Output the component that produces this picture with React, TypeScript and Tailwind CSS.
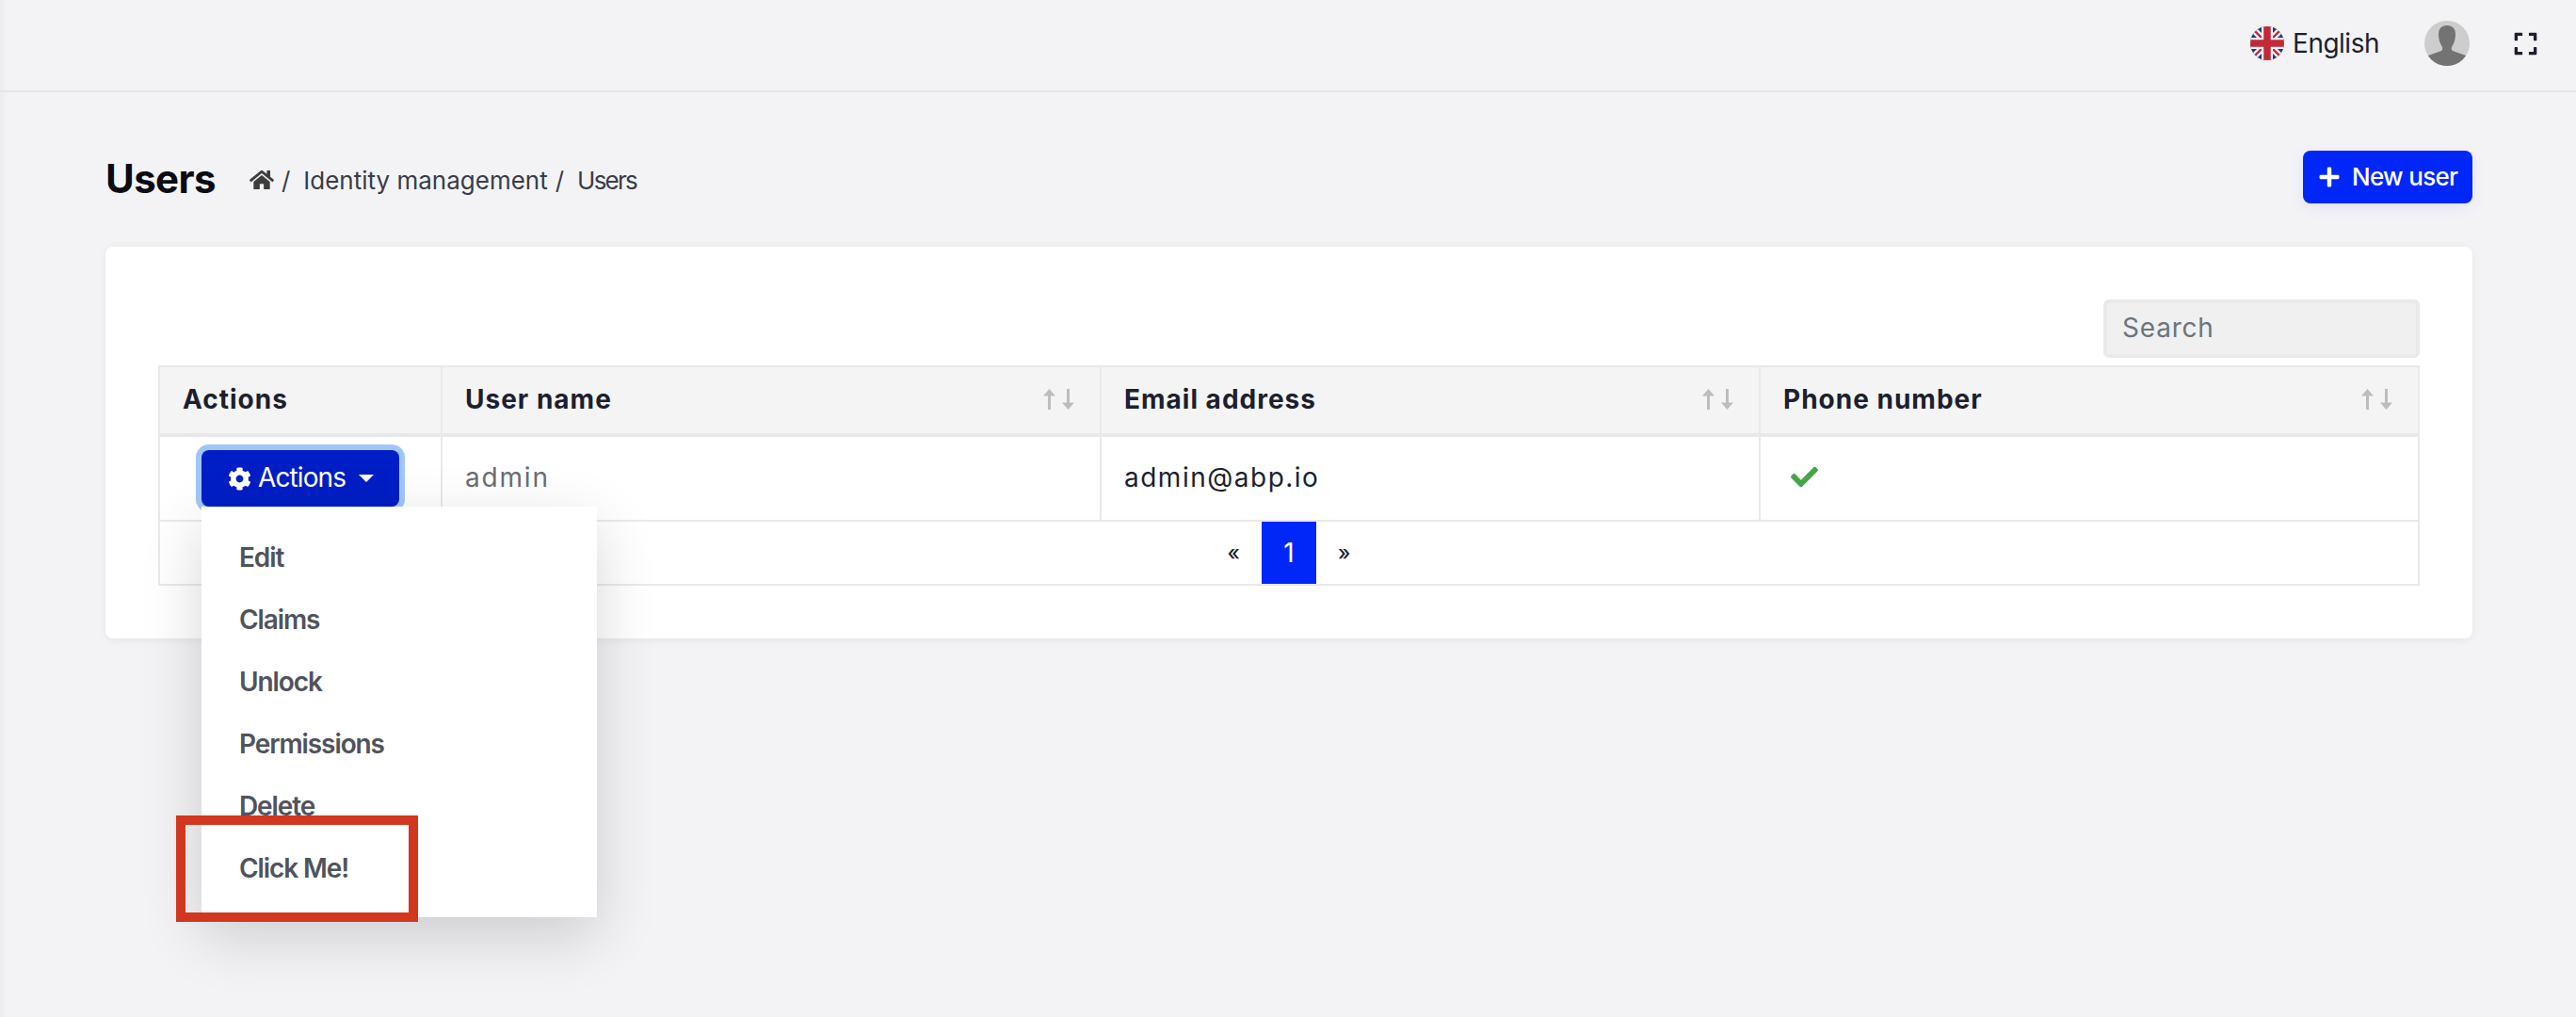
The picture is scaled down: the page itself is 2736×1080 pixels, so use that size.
import { FaCheck, FaCog, FaExpand, FaHome, FaPlus } from 'react-icons/fa';

const menuItems = ['Edit', 'Claims', 'Unlock', 'Permissions', 'Delete', 'Click Me!'];

// 英国国旗（圆形）
const FlagIcon = () => (
  <svg width="36" height="36" viewBox="0 0 36 36" className="shrink-0">
    <defs>
      <clipPath id="flag-circle">
        <circle cx="18" cy="18" r="18" />
      </clipPath>
    </defs>
    <g clipPath="url(#flag-circle)">
      <rect width="36" height="36" fill="#1f3a7a" />
      <path d="M0 0L36 36M36 0L0 36" stroke="#f4f4f6" strokeWidth="7" />
      <path d="M0 0L36 36M36 0L0 36" stroke="#c22a3a" strokeWidth="2.4" />
      <path d="M18 0V36M0 18H36" stroke="#f4f4f6" strokeWidth="12" />
      <path d="M18 0V36M0 18H36" stroke="#c22a3a" strokeWidth="7.5" />
    </g>
  </svg>
);

const AvatarIcon = () => (
  <svg width="48" height="48" viewBox="0 0 48 48" className="shrink-0">
    <defs>
      <clipPath id="avatar-circle">
        <circle cx="24" cy="24" r="24" />
      </clipPath>
    </defs>
    <g clipPath="url(#avatar-circle)">
      <rect width="48" height="48" fill="#cdcdcd" />
      <path
        d="M24 5c-6 0-9 3.500-9 9.500 0 5 1.500 9.500 3.500 12.500 1 1.500 1 4-.5 5L4 37v11h40V37l-14-5c-1.500-1-1.500-3.500-.5-5 2-3 3.500-7.500 3.500-12.500C33 8.500 30 5 24 5z"
        fill="#737373"
      />
    </g>
  </svg>
);

// 排序箭头
const SortIcon = () => (
  <svg width="33" height="22" viewBox="0 0 33 22" className="shrink-0" fill="#bcbdc1">
    <path d="M6.500 0L13 7.500H8V22H5V7.500H0z" />
    <path d="M26.500 22L33 14.500H28V0H25V14.500H20z" />
  </svg>
);

const HeadCell = ({ label, sortable, last }: { label: string; sortable?: boolean; last?: boolean }) => (
  <div className={`flex items-center justify-between pb-[3px] pl-6 pr-[27px] ${last ? '' : 'border-r-2 border-[#e9e9ea]'}`}>
    <span className="text-[28px] font-bold tracking-[1px] text-[#1d1f2e]">{label}</span>
    {sortable && <SortIcon />}
  </div>
);

export default function App() {
  return (
    <div className="relative h-[1080px] w-full overflow-hidden bg-[#f3f3f6] font-['Inter',sans-serif] shadow-[inset_10px_0_10px_-10px_rgba(0,0,0,0.06)]">
      {/* 顶部栏 */}
      <header className="flex h-[98px] items-center justify-end border-b-2 border-[#e4e4ea] pb-[4px] pr-[40px]">
        <FlagIcon />
        <span className="ml-[9px] text-[28px] tracking-[-0.5px] text-[#1d1f2e]">English</span>
        <span className="ml-[48px]">
          <AvatarIcon />
        </span>
        <FaExpand className="ml-[46px] text-[27px] text-[#1d1f2e]" />
      </header>

      <main className="pl-[112px] pr-[110px]">
        {/* 标题与面包屑 */}
        <div className="mt-[62px] flex h-[56px] items-center justify-between">
          <div className="flex items-center">
            <h1 className="pt-[2px] text-[42px] font-bold tracking-[-0.6px] text-[#0b0b12]">Users</h1>
            <nav className="ml-[36px] flex items-center pt-[6px] text-[26px] text-[#3a3c47]">
              <FaHome className="text-[26px] text-[#3d3d3d]" />
              <span className="ml-[8px]">/</span>
              <span className="ml-[14px]">Identity management</span>
              <span className="ml-[8px]">/</span>
              <span className="ml-[14px] tracking-[-1.8px]">Users</span>
            </nav>
          </div>
          <button className="flex h-[56px] w-[180px] items-center rounded-lg bg-[#0027f7] pl-[16px] text-[26px] font-medium text-white shadow-[0_4px_16px_rgba(0,39,247,0.08)]">
            <FaPlus className="text-[24px]" />
            <span className="ml-[12px] pb-[2px] tracking-[-0.7px]">New user</span>
          </button>
        </div>

        {/* 卡片 */}
        <section className="mt-[46px] rounded-lg bg-white p-[56px] shadow-[0_2px_10px_rgba(0,0,0,0.06)]">
          <div className="mb-2 flex justify-end">
            <div className="flex h-[62px] w-[336px] items-center rounded-md border-4 border-[#e9e9ea] bg-[#f0f0f1] pb-[2px] pl-4 text-[28px] tracking-[0.8px] text-[#6c757d]">
              Search
            </div>
          </div>

          <div className="border-2 border-[#e9e9ea]">
            <div className="grid h-[74px] grid-cols-[300px_700px_700px_1fr] border-b-4 border-[#e9e9ea] bg-[#f4f4f4]">
              <HeadCell label="Actions" />
              <HeadCell label="User name" sortable />
              <HeadCell label="Email address" sortable />
              <HeadCell label="Phone number" sortable last />
            </div>

            <div className="grid h-[90px] grid-cols-[300px_700px_700px_1fr] border-b-2 border-[#e9e9ea] text-[28px]">
              <div className="flex items-center justify-center border-r-2 border-[#e9e9ea]">
                <div className="relative">
                  <button className="flex h-[60px] w-[210px] items-center rounded-lg bg-[#001ec5] pl-[28px] text-white shadow-[0_0_0_6px_#9fc6fb]">
                    <FaCog className="text-[25px]" />
                    <span className="ml-[7px] pb-[2px] text-[28px] tracking-[-0.9px]">Actions</span>
                    <span className="ml-[14px] h-0 w-0 border-x-8 border-t-8 border-x-transparent border-t-white" />
                  </button>

                  {/* 下拉菜单 */}
                  <div className="absolute left-0 top-full z-10 h-[436px] w-[420px] bg-white pt-[21px] shadow-[0_20px_60px_rgba(0,0,0,0.16)]">
                    {menuItems.map((item) => (
                      <div key={item} className="flex h-[66px] items-center pl-[40px] text-[28px] font-semibold tracking-[-1.1px] text-[#50535d]">
                        {item}
                      </div>
                    ))}
                    {/* 红色标注框 */}
                    <div className="absolute left-[-27px] top-[328px] h-[113px] w-[257px] border-[10px] border-[#d1381f]" />
                  </div>
                </div>
              </div>
              <div className="flex items-center border-r-2 border-[#e9e9ea] pb-[3px] pl-6 tracking-[1.8px] text-[#6b6d75]">admin</div>
              <div className="flex items-center border-r-2 border-[#e9e9ea] pb-[3px] pl-6 tracking-[1.5px] text-[#1d1f2e]">admin@abp.io</div>
              <div className="flex items-center pb-[3px] pl-[32px]">
                <FaCheck className="text-[29px] text-[#46a546]" />
              </div>
            </div>

            {/* 分页 */}
            <div className="flex h-[66px] items-stretch justify-center text-[#1d1f2e]">
              <span className="flex items-center px-[23px] text-[22px] font-medium">«</span>
              <span className="flex w-[58px] items-center justify-center bg-[#0027f7] text-[28px] text-white">1</span>
              <span className="flex items-center px-[23px] text-[22px] font-medium">»</span>
            </div>
          </div>
        </section>
      </main>
    </div>
  );
}
